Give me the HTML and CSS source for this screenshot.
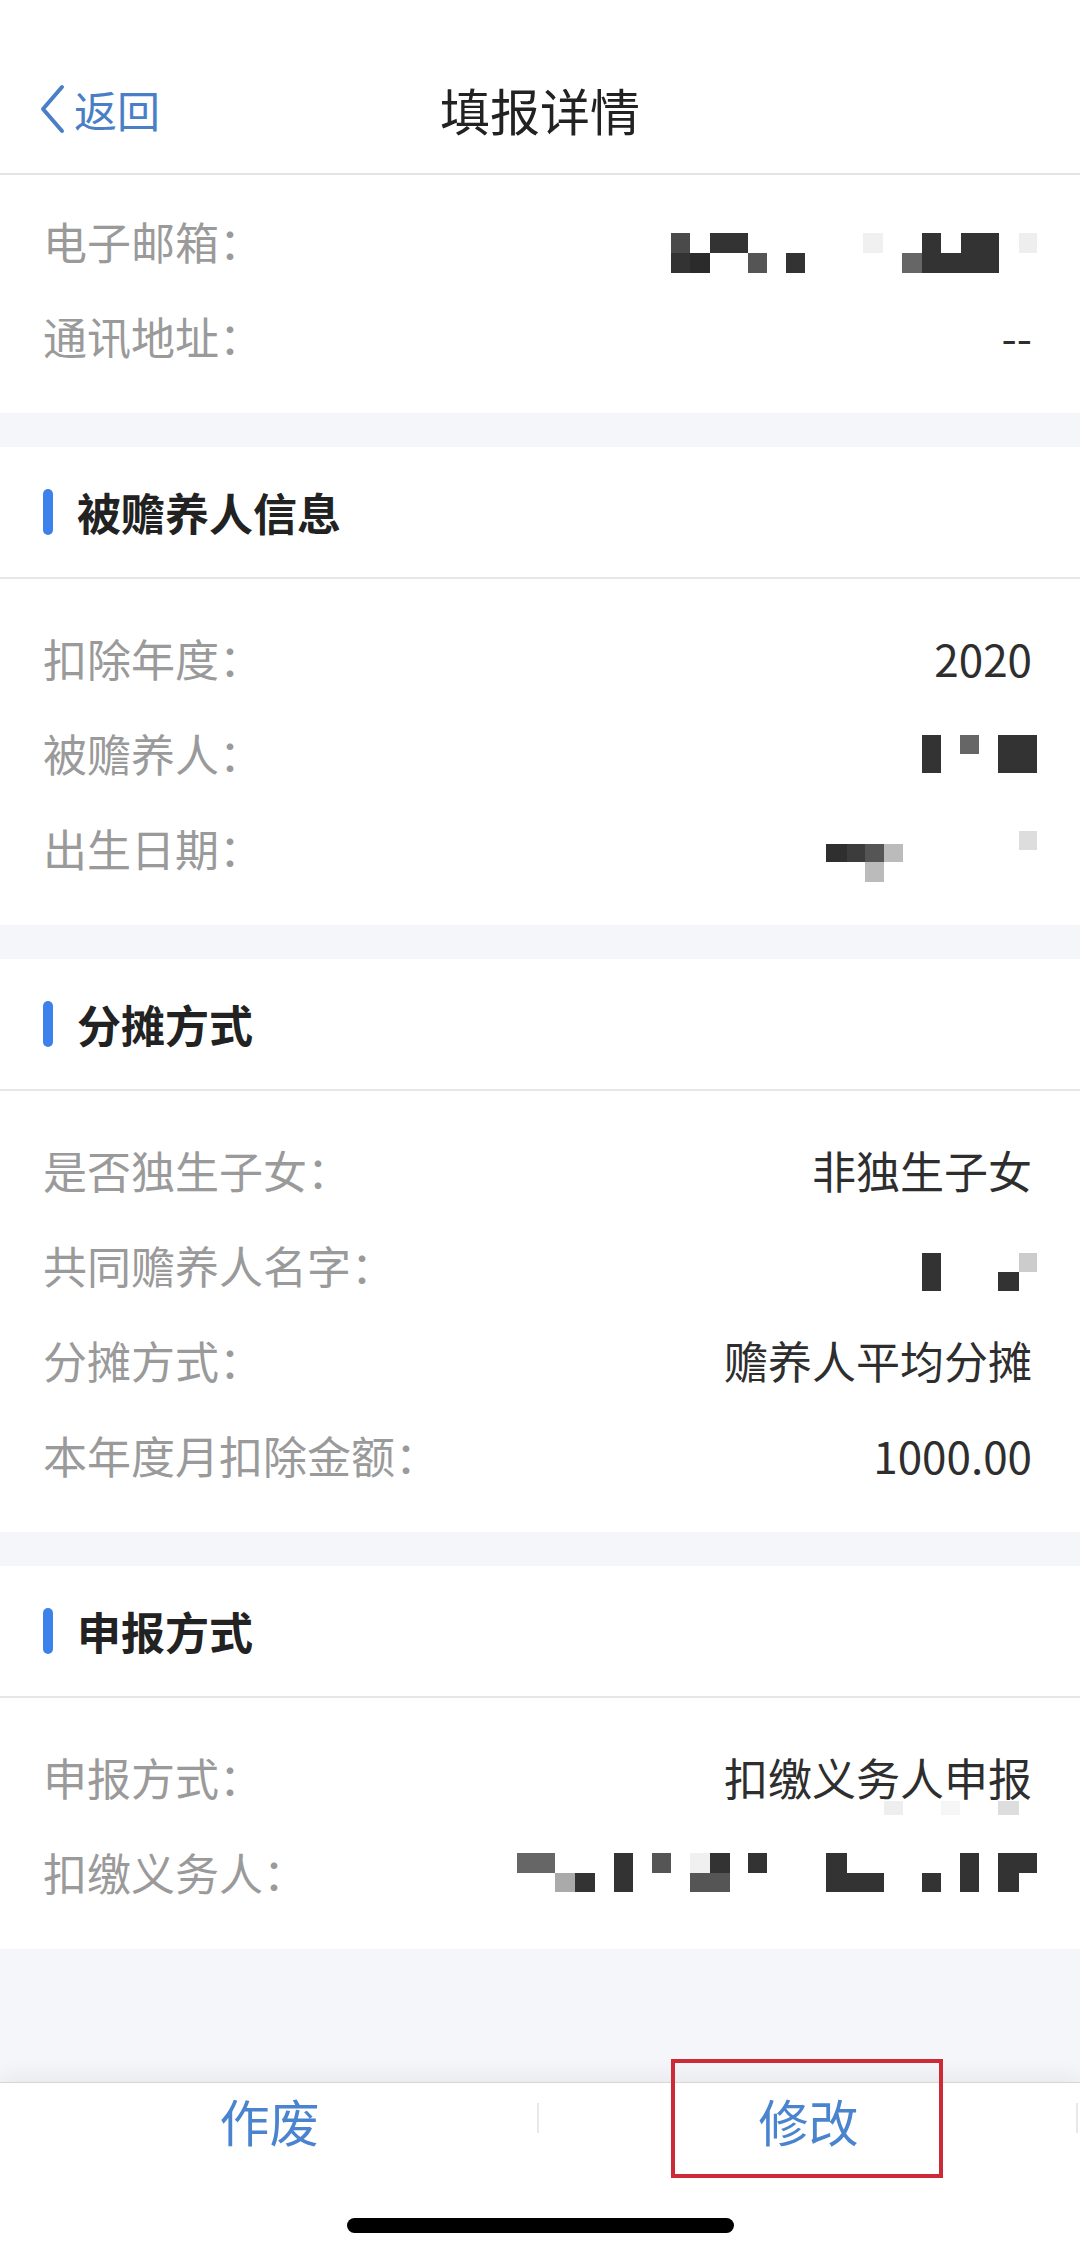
FILE: index.html
```html
<!DOCTYPE html>
<html lang="zh-CN">
<head>
<meta charset="utf-8">
<title>填报详情</title>
<link rel="stylesheet" href="styles.css">
</head>
<body>
<div class="page">
  <header class="header">
    <div class="nav">
      <a class="back">
        <svg class="chev" width="30" height="50" viewBox="0 0 30 50"><polyline points="24,3 5,25 24,47" fill="none" stroke="#4a7fc8" stroke-width="4" stroke-linecap="round" stroke-linejoin="round"/></svg>
        <span>返回</span>
      </a>
      <h1 class="title">填报详情</h1>
      <span></span>
    </div>
  </header>

  <main class="content">
    <section class="card">
      <div class="list list-first">
        <div class="row">
          <span class="label">电子邮箱：</span>
          <svg class="mask" width="366" height="64" viewBox="670 209 366 64">
            <rect x="670" y="233" width="19" height="20" fill="#4a4a4a"/>
            <rect x="670" y="253" width="19" height="20" fill="#333"/>
            <rect x="689" y="253" width="20" height="20" fill="#2b2b2b"/>
            <rect x="709" y="233" width="38" height="20" fill="#333"/>
            <rect x="747" y="253" width="19" height="20" fill="#555"/>
            <rect x="785" y="253" width="19" height="20" fill="#333"/>
            <rect x="862" y="233" width="20" height="20" fill="#f0f0f0"/>
            <rect x="901" y="253" width="20" height="20" fill="#666"/>
            <rect x="921" y="233" width="19" height="40" fill="#333"/>
            <rect x="940" y="253" width="20" height="20" fill="#333"/>
            <rect x="960" y="233" width="38" height="40" fill="#333"/>
            <rect x="1018" y="233" width="18" height="20" fill="#eee"/>
          </svg>
        </div>
        <div class="row">
          <span class="label">通讯地址：</span>
          <span class="value">--</span>
        </div>
      </div>
    </section>

    <section class="card">
      <div class="card-head"><i class="bar"></i><h2>被赡养人信息</h2></div>
      <div class="list">
        <div class="row">
          <span class="label">扣除年度：</span>
          <span class="value">2020</span>
        </div>
        <div class="row">
          <span class="label">被赡养人：</span>
          <svg class="mask" width="115" height="40" viewBox="921 733 115 40">
            <rect x="921" y="735" width="19" height="38" fill="#333"/>
            <rect x="959" y="735" width="19" height="19" fill="#666"/>
            <rect x="997" y="735" width="39" height="38" fill="#333"/>
          </svg>
        </div>
        <div class="row">
          <span class="label">出生日期：</span>
          <svg class="mask" width="211" height="68" viewBox="825 815 211 68">
            <rect x="1018" y="832" width="18" height="19" fill="#ddd"/>
            <rect x="825" y="845" width="21" height="18" fill="#2f2f2f"/>
            <rect x="846" y="845" width="18" height="18" fill="#3c3c3c"/>
            <rect x="864" y="845" width="19" height="18" fill="#555"/>
            <rect x="883" y="845" width="19" height="18" fill="#bbb"/>
            <rect x="864" y="863" width="19" height="20" fill="#bbb"/>
          </svg>
        </div>
      </div>
    </section>

    <section class="card">
      <div class="card-head"><i class="bar"></i><h2>分摊方式</h2></div>
      <div class="list">
        <div class="row">
          <span class="label">是否独生子女：</span>
          <span class="value">非独生子女</span>
        </div>
        <div class="row">
          <span class="label">共同赡养人名字：</span>
          <svg class="mask" width="115" height="52" viewBox="921 1242 115 52">
            <rect x="921" y="1256" width="19" height="38" fill="#333"/>
            <rect x="997" y="1275" width="21" height="19" fill="#333"/>
            <rect x="1018" y="1256" width="18" height="19" fill="#ccc"/>
          </svg>
        </div>
        <div class="row">
          <span class="label">分摊方式：</span>
          <span class="value">赡养人平均分摊</span>
        </div>
        <div class="row">
          <span class="label">本年度月扣除金额：</span>
          <span class="value">1000.00</span>
        </div>
      </div>
    </section>

    <section class="card">
      <div class="card-head"><i class="bar"></i><h2>申报方式</h2></div>
      <div class="list">
        <div class="row">
          <span class="label">申报方式：</span>
          <span class="value">扣缴义务人申报</span>
        </div>
        <div class="row">
          <span class="label">扣缴义务人：</span>
          <svg class="mask mask-over" width="520" height="40" viewBox="516 1852 520 40">
            <rect x="883" y="1801" width="19" height="14" fill="#eee"/>
            <rect x="940" y="1801" width="19" height="14" fill="#f6f6f6"/>
            <rect x="997" y="1801" width="21" height="14" fill="#ddd"/>
            <rect x="516" y="1853" width="38" height="20" fill="#666"/>
            <rect x="613" y="1853" width="19" height="39" fill="#333"/>
            <rect x="651" y="1853" width="19" height="20" fill="#555"/>
            <rect x="689" y="1853" width="20" height="20" fill="#f0f0f0"/>
            <rect x="709" y="1853" width="20" height="20" fill="#333"/>
            <rect x="747" y="1853" width="19" height="20" fill="#333"/>
            <rect x="825" y="1853" width="21" height="39" fill="#333"/>
            <rect x="959" y="1853" width="19" height="39" fill="#333"/>
            <rect x="997" y="1853" width="39" height="20" fill="#333"/>
            <rect x="554" y="1873" width="20" height="19" fill="#aaa"/>
            <rect x="574" y="1873" width="20" height="19" fill="#333"/>
            <rect x="689" y="1873" width="40" height="19" fill="#555"/>
            <rect x="846" y="1873" width="37" height="19" fill="#333"/>
            <rect x="921" y="1873" width="19" height="19" fill="#333"/>
            <rect x="997" y="1873" width="21" height="19" fill="#333"/>
          </svg>
        </div>
      </div>
    </section>
  </main>

  <footer class="tabbar">
    <div class="tabs">
      <button class="tab">作废</button>
      <button class="tab">修改</button>
    </div>
    <div class="highlight"></div>
    <div class="home-indicator"></div>
  </footer>
</div>
</body>
</html>
```

FILE: styles.css
```css
* { box-sizing: border-box; }

html, body {
  margin: 0;
  padding: 0;
}

body {
  width: 1080px;
  height: 2255px;
  overflow: hidden;
  background: #f4f6f9;
  font-family: "Noto Sans CJK SC", "Noto Sans", sans-serif;
}

.page {
  display: flex;
  flex-direction: column;
  height: 2255px;
}

/* Header */
.header {
  background: #fff;
  padding: 64px 0 19px;
  border-bottom: 2px solid #e4e4e4;
}

.nav {
  display: grid;
  grid-template-columns: 1fr auto 1fr;
  align-items: center;
  height: 90px;
}

.back {
  display: flex;
  align-items: center;
  padding-left: 38px;
  color: #4a7fc8;
  font-size: 43px;
  line-height: 1;
}

.chev {
  display: block;
  margin-right: 6px;
}

.title {
  margin: 0;
  font-size: 50px;
  font-weight: 400;
  color: #222;
  line-height: 1;
}

/* Content */
.content {
  flex: 1;
  display: flex;
  flex-direction: column;
  gap: 34px;
}

.card {
  background: #fff;
}

.card-head {
  display: flex;
  align-items: center;
  height: 132px;
  padding-left: 43px;
  border-bottom: 2px solid #e6e6e6;
}

.bar {
  display: block;
  width: 10px;
  height: 46px;
  border-radius: 5px;
  background: #3d82eb;
  margin-right: 24px;
}

.card-head h2 {
  margin: 0;
  font-size: 44px;
  font-weight: 700;
  color: #222;
  line-height: 1;
}

.list {
  padding: 31px 0 30px;
}

.list-first {
  padding-top: 18px;
}

.row {
  display: flex;
  align-items: center;
  justify-content: space-between;
  height: 95px;
  padding: 0 48px 0 43px;
}

.label {
  font-size: 44px;
  color: #9a9a9a;
  white-space: nowrap;
}

.value {
  font-size: 44px;
  color: #2e2e2e;
  white-space: nowrap;
}

.mask {
  display: block;
  margin-right: -5px;
  flex: none;
}

.mask-over {
  overflow: visible;
}

/* Tab bar */
.tabbar {
  position: relative;
  background: #fff;
  border-top: 1px solid #d6d6d6;
  box-shadow: 0 -8px 18px rgba(0, 0, 0, 0.05);
  height: 173px;
  display: flex;
  flex-direction: column;
  align-items: center;
}

.tabs {
  display: grid;
  grid-template-columns: 539px 539px;
  width: 100%;
  height: 74px;
}

.tab {
  position: relative;
  border: 0;
  background: transparent;
  font-family: inherit;
  font-size: 50px;
  color: #4a84cf;
  padding: 0;
  line-height: 1;
}

.tab::after {
  content: "";
  position: absolute;
  right: 0;
  top: 20px;
  width: 2px;
  height: 30px;
  background: #e8e8e8;
}

.highlight {
  position: absolute;
  left: 671px;
  top: -24px;
  width: 272px;
  height: 119px;
  border: 4px solid #cc2a36;
}

.home-indicator {
  margin-top: 61px;
  width: 387px;
  height: 15px;
  border-radius: 8px;
  background: #000;
}
```
